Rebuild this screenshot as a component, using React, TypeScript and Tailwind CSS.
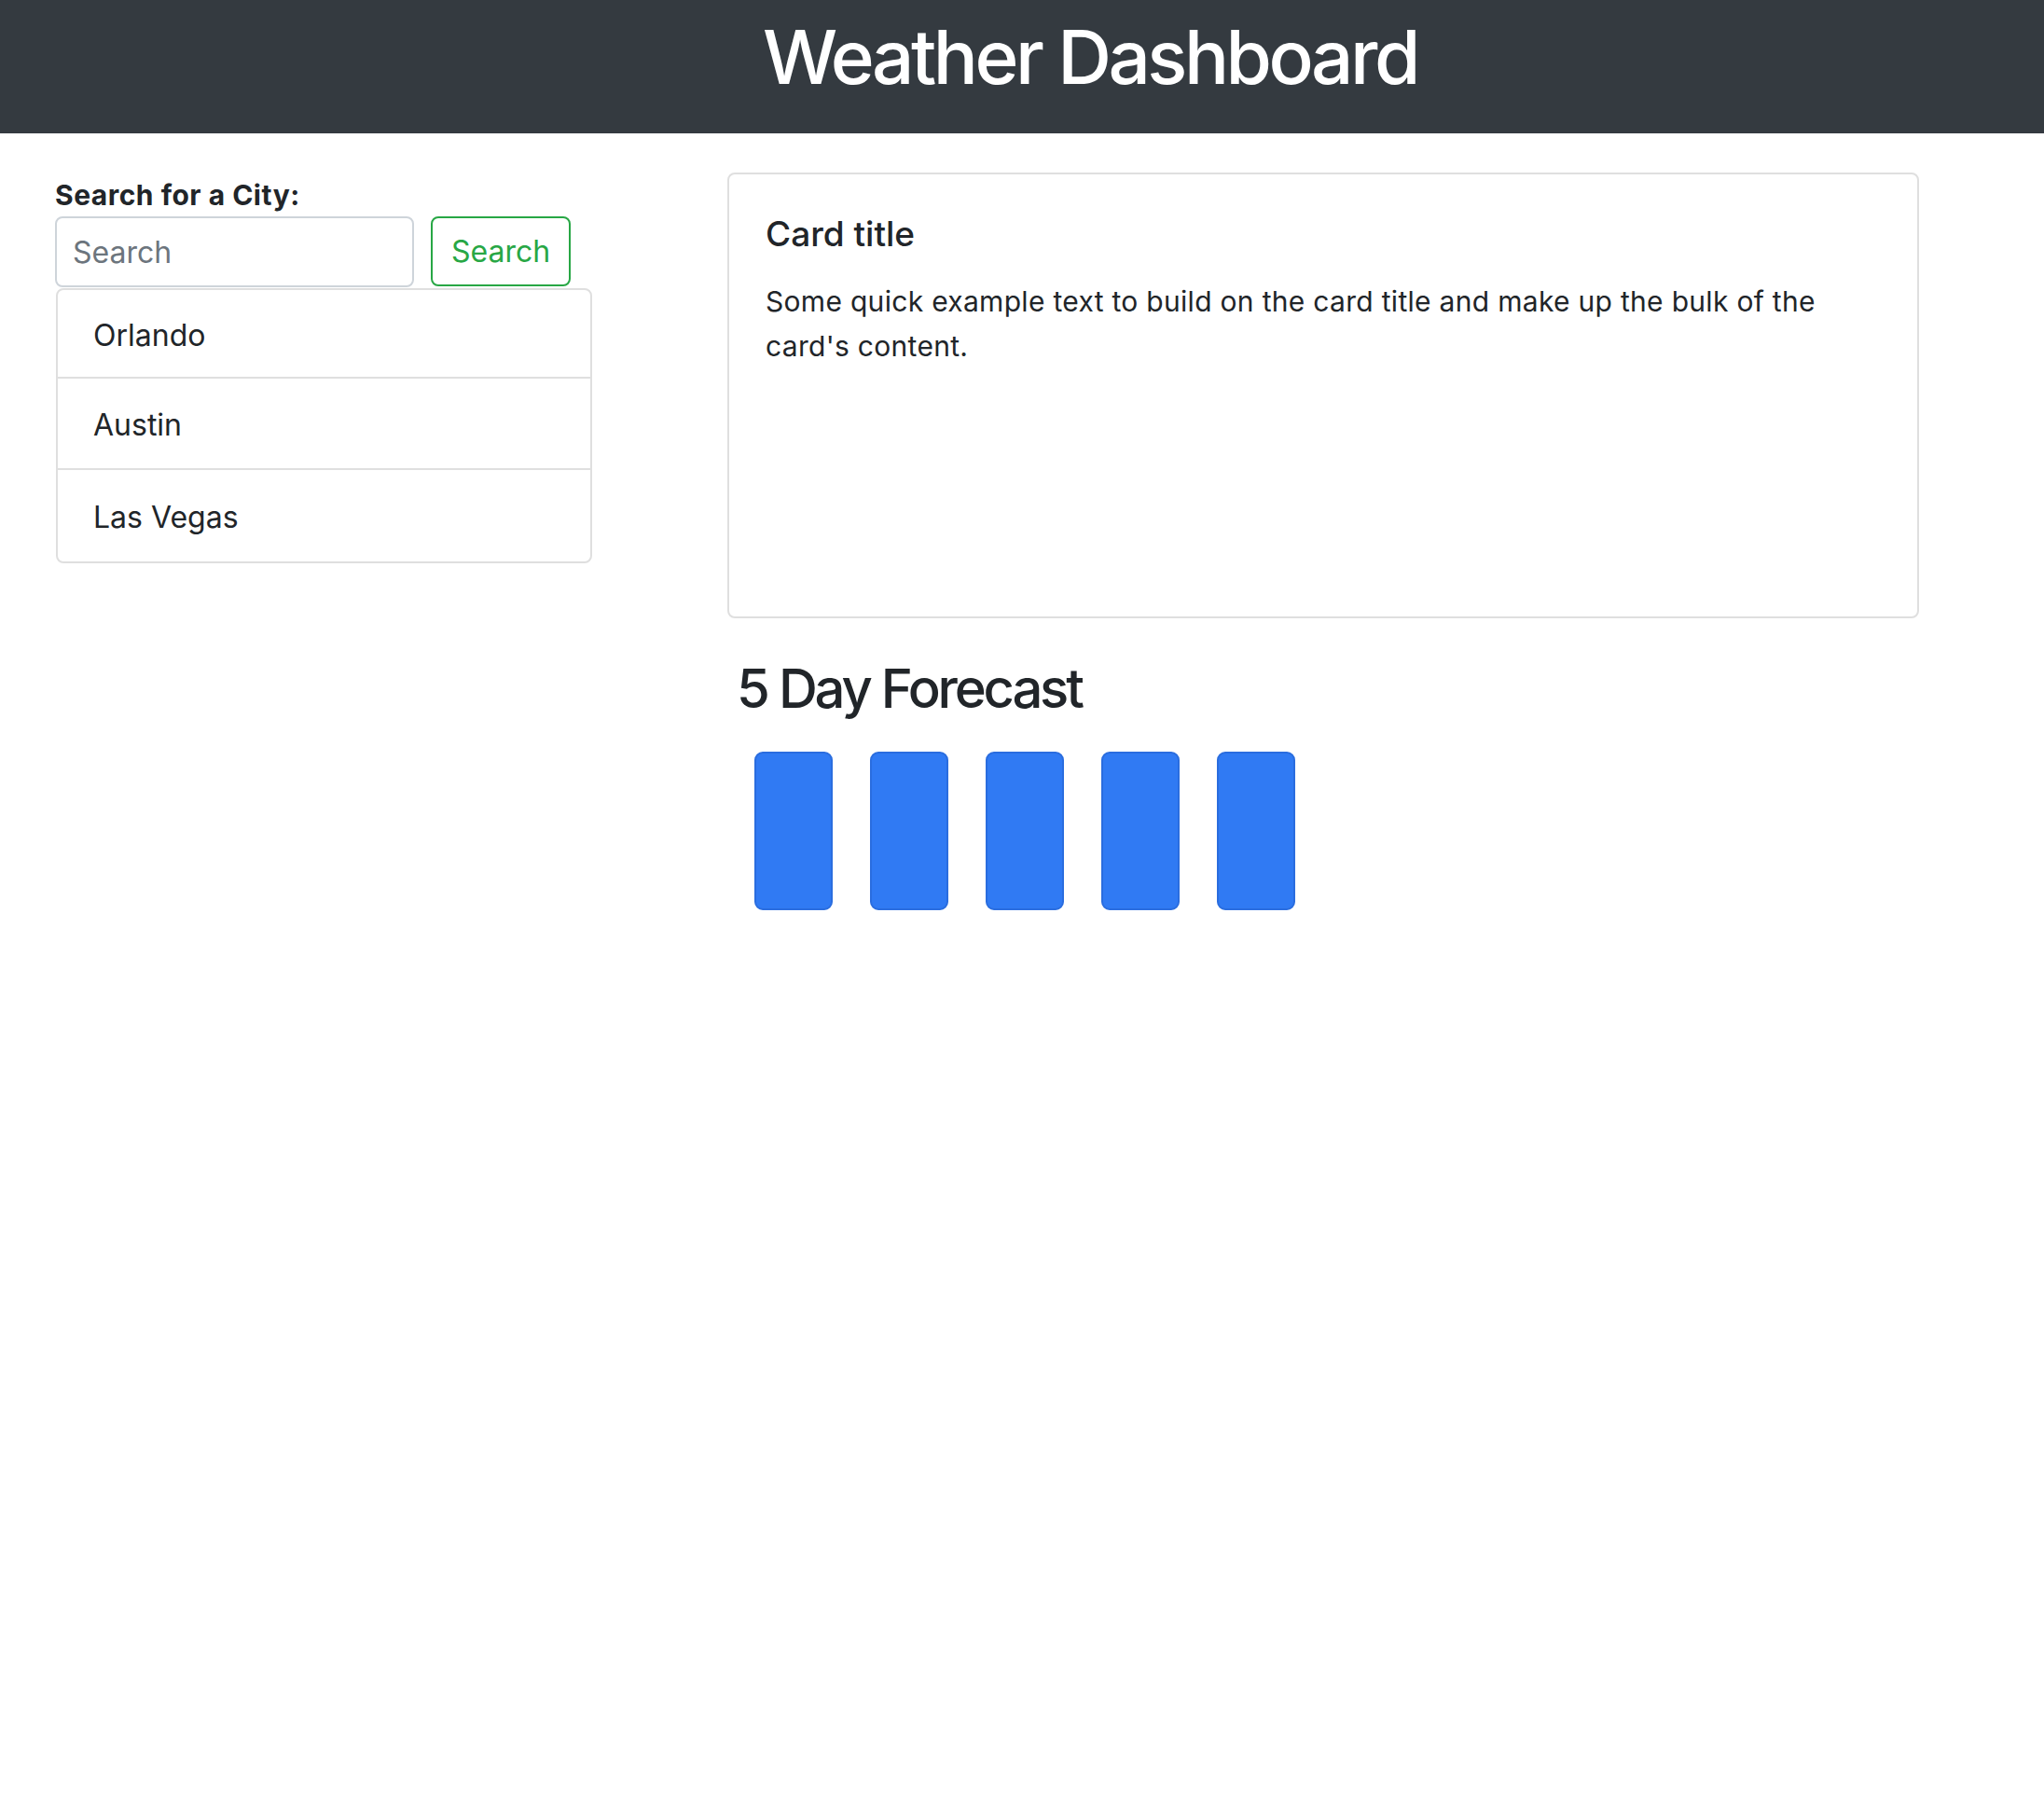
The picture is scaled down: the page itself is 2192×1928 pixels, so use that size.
import React from "react";

const cities = ["Orlando", "Austin", "Las Vegas"];

export default function App() {
  return (
    <div
      className="min-h-[1928px] bg-white text-[#212529]"
      style={{ fontFamily: "Inter, 'Noto Sans', sans-serif" }}
    >
      <header className="h-[143px] bg-[#343a40] pt-[13px] pl-[146px] text-center">
        <h1 className="text-[80px] leading-[96px] font-medium tracking-[-3.5px] text-white">Weather Dashboard</h1>
      </header>

      <main className="flex pt-[42px]">
        <aside className="w-[780px] shrink-0 pl-[59px] pt-[7px]">
          <label className="block text-[30px] leading-[35px] font-bold tracking-[0.5px]">Search for a City:</label>
          <div className="mt-[5px] flex gap-[18px]">
            <input
              type="text"
              placeholder="Search"
              className="h-[76px] w-[385px] rounded-[8px] border-2 border-[#ced4da] px-[17px] text-[32px] text-[#495057] placeholder:text-[#6c757d] outline-none"
            />
            <button className="h-[75px] w-[150px] rounded-[8px] border-2 border-[#28a745] text-[32px] text-[#28a745] bg-white">
              Search
            </button>
          </div>
          <ul className="ml-px mt-px w-[575px] rounded-[8px] border-2 border-[#dfdfdf] divide-y-2 divide-[#dfdfdf]">
            {cities.map((c) => (
              <li
                key={c}
                className="flex h-[98px] first:h-[95px] items-center pl-[38px] pt-[4px] text-[32px] leading-[48px]"
              >
                {c}
              </li>
            ))}
          </ul>
        </aside>

        <section className="w-[1278px] shrink-0">
          <div className="h-[478px] rounded-[8px] border-2 border-[#dfdfdf] px-[39px] pt-[42px]">
            <h5 className="text-[37px] leading-[43px] font-medium">Card title</h5>
            <p className="mt-[28px] text-[30px] leading-[47.5px] tracking-[0.3px]">
              Some quick example text to build on the card title and make up the bulk of the card's content.
            </p>
          </div>

          <h2 className="ml-[10px] mt-[40px] text-[58px] leading-[70px] font-medium tracking-[-3.2px]">5 Day Forecast</h2>
          <div className="ml-[29px] mt-[33px] flex gap-[40px]">
            {[0, 1, 2, 3, 4].map((i) => (
              <div
                key={i}
                className="h-[170px] w-[84px] rounded-[9px] border-2 border-[#2a6ddf] bg-[#307af3]"
              />
            ))}
          </div>
        </section>
      </main>
    </div>
  );
}
